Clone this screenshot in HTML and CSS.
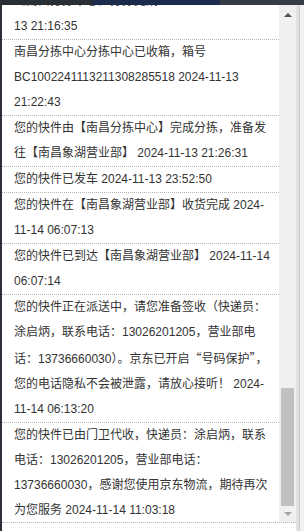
FILE: index.html
```html
<!DOCTYPE html>
<html lang="zh-CN">
<head>
    <meta charset="UTF-8">
    <meta name="viewport" content="width=device-width, initial-scale=1.0">
    <title>物流跟踪</title>
    <link rel="stylesheet" href="styles.css">
</head>
<body>
    <div class="topbar">
        <span class="seg seg-left"></span>
        <span class="seg seg-mid"></span>
        <span class="seg seg-right"></span>
    </div>

    <div class="frame">
        <div class="panel">
            <div class="viewport">
                <div class="list">
                    <div class="items">
                        <div class="item">您的快件已到达南昌分拣中心，正在分拣处理中【南昌分拣中心】分拣完成 2024-11-<br>13 21:16:35</div>
                        <div class="item">南昌分拣中心分拣中心已收箱，箱号 BC1002241113211308285518 2024-11-13 21:22:43</div>
                        <div class="item">您的快件由【南昌分拣中心】完成分拣，准备发往【南昌象湖营业部】 2024-11-13 21:26:31</div>
                        <div class="item">您的快件已发车 2024-11-13 23:52:50</div>
                        <div class="item">您的快件在【南昌象湖营业部】收货完成 2024-11-14 06:07:13</div>
                        <div class="item">您的快件已到达【南昌象湖营业部】 2024-11-14 06:07:14</div>
                        <div class="item">您的快件正在派送中，请您准备签收（快递员：涂启炳，联系电话：13026201205，营业部电话：13736660030）。京东已开启<span class="cjk">“</span>号码保护<span class="cjk">”</span>，您的电话隐私不会被泄露，请放心接听！ 2024-11-14 06:13:20</div>
                        <div class="item">您的快件已由门卫代收，快递员：涂启炳，联系电话：13026201205，营业部电话：13736660030，感谢您使用京东物流，期待再次为您服务 2024-11-14 11:03:18</div>
                    </div>
                </div>
                <div class="scrollbar">
                    <span class="arrow arrow-up"></span>
                    <div class="thumb"></div>
                    <span class="arrow arrow-down"></span>
                </div>
            </div>
        </div>
        <div class="side"></div>
    </div>
</body>
</html>
```

FILE: styles.css
```css
html, body {
    height: 100%;
}

body {
    margin: 0;
    padding: 0;
    background-color: #2b3038;
    font-family: "Liberation Sans", "Noto Sans CJK SC", sans-serif;
    font-size: 12px;
    color: #333;
    display: flex;
    flex-direction: column;
    overflow: hidden;
}

/* franja superior oscura */
.topbar {
    height: 5px;
    display: flex;
    flex-shrink: 0;
}

.seg-left {
    width: 92px;
    background-color: #2a2e35;
}

.seg-mid {
    width: 128px;
    background-color: #1c2b4b;
}

.seg-right {
    flex: 1;
    background-color: #343c48;
}

.frame {
    flex: 1;
    display: flex;
    padding-left: 2px;
    min-height: 0;
}

.panel {
    width: 294px;
    background-color: #fff;
    display: flex;
    flex-direction: column;
}

.viewport {
    height: 517px;
    display: flex;
    border-bottom: 1px dotted #b5b5b5;
}

.list {
    flex: 1;
    overflow: hidden;
}

.items {
    margin-top: -41px; /* desplazamiento del scroll */
}

.item {
    padding: 0 5px 0 12px;
    line-height: 25px;
    border-bottom: 1px dotted #b5b5b5;
}

.item:last-child {
    border-bottom: none;
}

/* comillas de ancho completo */
.cjk {
    font-family: "Noto Sans CJK SC", sans-serif;
}

/* barra de scroll dibujada */
.scrollbar {
    width: 17px;
    background-color: #f0f0f0;
    display: flex;
    flex-direction: column;
    align-items: center;
}

.arrow {
    width: 0;
    height: 0;
    border-left: 4px solid transparent;
    border-right: 4px solid transparent;
}

.arrow-up {
    margin-top: 8px;
    border-bottom: 4px solid #505050;
}

.arrow-down {
    margin-top: 6px;
    border-top: 4px solid #a3a3a3;
}

.thumb {
    width: 13px;
    height: 118px;
    margin-top: 371px;
    background-color: #c1c1c1;
}

.side {
    flex: 1;
    background-color: #f2f2f2;
    border-left: 3px solid #e2e2e2;
    box-shadow: inset 1px 0 0 #c9c9c9;
}
```
